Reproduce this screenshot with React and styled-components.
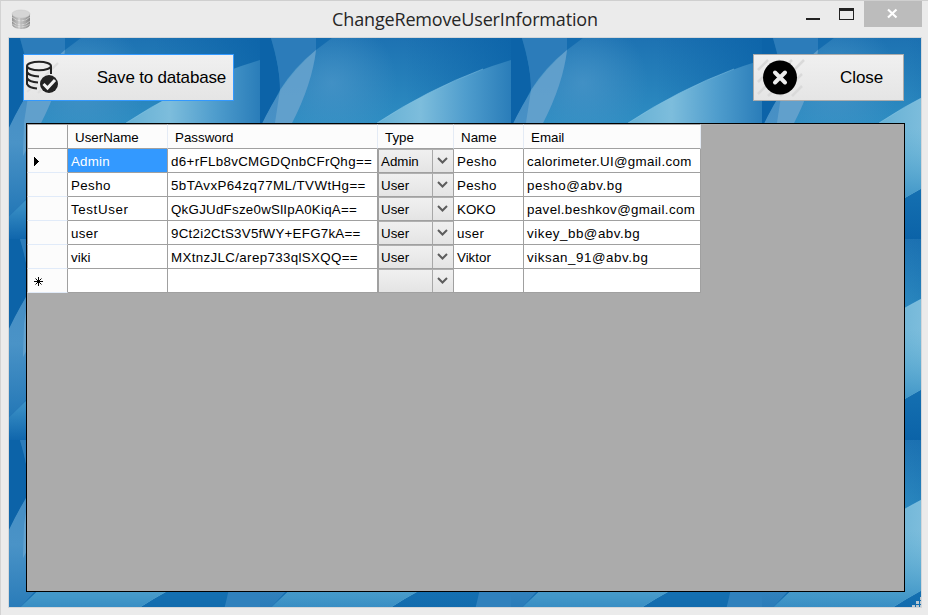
import React from 'react';
import styled, { createGlobalStyle } from 'styled-components';

const GlobalStyle = createGlobalStyle`
  * { box-sizing: border-box; }
  body { margin: 0; overflow: hidden; background: #ebebeb; }
`;

const Window = styled.div`
  width: 928px;
  height: 615px;
  display: flex;
  flex-direction: column;
  background: #ebebeb;
  border-top: 1px solid #cfcfcf;
  border-left: 1px solid #d3d3d3;
  font-family: 'Liberation Sans', Arial, sans-serif;
  color: #000;
`;

const TitleBar = styled.header`
  height: 36px;
  display: grid;
  grid-template-columns: 125px 1fr 124px;
  flex: none;
`;

const AppIcon = styled.svg`
  width: 20px;
  height: 20px;
  margin: 8px 0 0 10px;
`;

const Title = styled.h1`
  margin: 0;
  font: 400 18px/37px 'Open Sans', sans-serif;
  letter-spacing: -0.16px;
  text-align: center;
  color: #262626;
  white-space: nowrap;
`;

const WindowControls = styled.div`
  display: flex;
  justify-content: flex-end;
  padding-right: 6px;
`;

const ControlIcon = styled.svg`
  width: ${(p) => p.$width}px;
  height: 26px;
  flex: none;
  background: ${(p) => (p.$filled ? '#bcbcbc' : 'transparent')};
`;

const Client = styled.main`
  position: relative;
  width: 914px;
  height: 571px;
  margin-left: 7px;
  padding: 16px 17px 15px;
  border: 1px solid #d4d7da;
  display: flex;
  flex-direction: column;
  isolation: isolate;
`;

const Wallpaper = styled.svg`
  position: absolute;
  inset: 0;
  width: 912px;
  height: 569px;
  z-index: -1;
`;

const Toolbar = styled.div`
  height: 47px;
  margin: 0 0 22px -3px;
  display: flex;
  justify-content: space-between;
  flex: none;
`;

const ActionButton = styled.button`
  width: ${(p) => p.$width}px;
  height: 47px;
  padding: 0 ${(p) => p.$padRight}px 0 0;
  display: flex;
  align-items: center;
  justify-content: space-between;
  border: 1px solid ${(p) => (p.$focused ? '#3399ff' : '#acacac')};
  background: linear-gradient(#f0f0f0, #e5e5e5);
  color: #000;
  font: 17px 'Liberation Sans', Arial, sans-serif;
  letter-spacing: ${(p) => p.$spacing}px;
  white-space: nowrap;
`;

const ButtonIcon = styled.svg`
  width: 52px;
  height: 45px;
  flex: none;
`;

const GridPanel = styled.section`
  width: 879px;
  height: 469px;
  border: 1px solid #000;
  background: #ababab;
  flex: none;
`;

const DataGrid = styled.div`
  width: 674px;
  display: grid;
  grid-template-columns: 41px 100px 210px 76px 70px 177px;
  grid-template-rows: 25px;
  grid-auto-rows: 24px;
  font-size: 13.33px;
  white-space: nowrap;
`;

const HeaderCell = styled.div`
  padding: 1px 0 0 7px;
  line-height: 24px;
  background: #fcfcfc;
  border-top: 1px solid #a8a8a8;
  border-right: 1px solid ${(p) => (p.$corner ? '#a0a0a0' : '#e4ebf5')};
  border-bottom: 1px solid #a0a0a0;
  border-left: ${(p) => (p.$corner ? '1px solid #a8a8a8' : 'none')};
`;

const RowHeader = styled.div`
  background: #fcfcfc;
  border-left: 1px solid #a8a8a8;
  border-right: 1px solid #a0a0a0;
  border-bottom: 1px solid #e1ebf9;
`;

const Marker = styled.svg`
  display: block;
  width: 39px;
  height: 23px;
`;

const Cell = styled.div`
  padding-left: 3px;
  line-height: 25px;
  letter-spacing: ${(p) => p.$spacing || 0}px;
  color: ${(p) => (p.$selected ? '#fff' : '#000')};
  background: ${(p) => (p.$selected ? '#3399ff' : '#fff')};
  border-right: 1px solid #a0a0a0;
  border-bottom: 1px solid #a0a0a0;
`;

const ComboCell = styled.div`
  display: grid;
  grid-template-columns: 54px 20px;
  border: 1px solid #a0a0a0;
  border-top-color: #b0b0b0;
  background: linear-gradient(#f0f0f0, #e4e4e4);
`;

const ComboValue = styled.span`
  height: 22px;
  padding-left: 2px;
  line-height: 23px;
  border-right: 1px solid #a8a8a8;
`;

const ComboArrow = styled.svg`
  width: 20px;
  height: 22px;
`;

const SizeGrip = styled.svg`
  position: absolute;
  right: 0;
  bottom: 0;
  width: 10px;
  height: 10px;
`;

const columns = ['UserName', 'Password', 'Type', 'Name', 'Email'];

const users = [
  { user: 'Admin', password: 'd6+rFLb8vCMGDQnbCFrQhg==', type: 'Admin', name: 'Pesho', email: 'calorimeter.UI@gmail.com', tracking: [0.2, 0.34, 0.4, 0.34] },
  { user: 'Pesho', password: '5bTAvxP64zq77ML/TVWtHg==', type: 'User', name: 'Pesho', email: 'pesho@abv.bg', tracking: [0.4, 0.42, 0.4, 0.58] },
  { user: 'TestUser', password: 'QkGJUdFsze0wSlIpA0KiqA==', type: 'User', name: 'KOKO', email: 'pavel.beshkov@gmail.com', tracking: [0.62, 0.25, 0, 0.38] },
  { user: 'user', password: '9Ct2i2CtS3V5fWY+EFG7kA==', type: 'User', name: 'user', email: 'vikey_bb@abv.bg', tracking: [0.3, 0.26, 0.3, 0.53] },
  { user: 'viki', password: 'MXtnzJLC/arep733qlSXQQ==', type: 'User', name: 'Viktor', email: 'viksan_91@abv.bg', tracking: [0.1, 0.35, 0, 0.55] },
  { user: '', password: '', type: '', name: '', email: '', tracking: [] },
];

function Background() {
  return (
    <Wallpaper aria-hidden="true">
      <defs>
        <linearGradient id="base" x1="0" y1="0" x2="0" y2="1">
          <stop offset="0" stopColor="#1d72b2" />
          <stop offset="0.42" stopColor="#2e8dc2" />
          <stop offset="0.75" stopColor="#1570b1" />
          <stop offset="1" stopColor="#0b63a8" />
        </linearGradient>
        <radialGradient id="glow" gradientUnits="userSpaceOnUse" cx="72" cy="45" r="65">
          <stop offset="0" stopColor="#4d97c9" stopOpacity="0.7" />
          <stop offset="1" stopColor="#4d97c9" stopOpacity="0" />
        </radialGradient>
        <linearGradient id="edgeShade">
          <stop offset="0" stopColor="#0961a7" stopOpacity="0" />
          <stop offset="1" stopColor="#0961a7" stopOpacity="0.75" />
        </linearGradient>
        <linearGradient id="swoosh" x1="0" y1="0" x2="1" y2="0">
          <stop offset="0" stopColor="#3584bf" />
          <stop offset="0.4" stopColor="#5dabd1" />
          <stop offset="0.64" stopColor="#7dbddc" />
          <stop offset="0.82" stopColor="#4f9dcd" />
          <stop offset="1" stopColor="#2a7db9" />
        </linearGradient>
        <linearGradient id="lowerFade" gradientUnits="userSpaceOnUse" x1="0" y1="90" x2="0" y2="201">
          <stop offset="0" stopColor="#5aaed3" stopOpacity="0" />
          <stop offset="0.6" stopColor="#4297c8" stopOpacity="0.95" />
          <stop offset="0.73" stopColor="#348ac2" />
          <stop offset="1" stopColor="#1066ac" />
        </linearGradient>
        <linearGradient id="leftBand" x1="0" y1="0" x2="0" y2="1">
          <stop offset="0" stopColor="#4289c0" />
          <stop offset="0.55" stopColor="#4a93c7" />
          <stop offset="1" stopColor="#2377b6" />
        </linearGradient>
        <pattern id="tile" width="251" height="201" patternUnits="userSpaceOnUse">
          <rect width="251" height="201" fill="url(#base)" />
          <rect width="251" height="201" fill="url(#glow)" />
          <rect x="145" width="106" height="90" fill="url(#edgeShade)" />
          <path d="M0 0H11Q21 35 20 52L0 90Z" fill="#0c63a8" />
          <path d="M11 0H56V12Q34 28 20 52Q20 28 11 0Z" fill="#2c7cba" />
          <path d="M56 12L72 0H56Z" fill="#0f68ad" fillOpacity="0.8" />
          <path d="M0 90Q22 42 56 12Q52 46 32 85L45 130L0 180Z" fill="url(#leftBand)" />
          <path d="M32 85L45 130L30 155Q70 115 117 85Z" fill="#2d8cc2" />
          <path d="M20 52Q35 29 56 12Q52 46 32 85L14 118L15 85Z" fill="#69a5cf" fillOpacity="0.75" />
          <path d="M0 179Q58 119 117 85Q181 43 251 22V115Q185 132 130 168L80 201H0Z" fill="url(#swoosh)" />
          <path d="M0 179Q58 119 117 85Q181 43 251 22V115Q185 132 130 168L80 201H0Z" fill="url(#lowerFade)" />
          <path d="M117 85Q167 52 223 31" fill="none" stroke="#8ac7e5" strokeOpacity="0.5" />
          <path d="M226 120L251 115V201H207Q219 157 226 120Z" fill="#3081bd" />
        </pattern>
      </defs>
      <rect width="912" height="569" fill="url(#tile)" />
    </Wallpaper>
  );
}

function DatabaseCheckIcon() {
  return (
    <ButtonIcon viewBox="0 0 52 45" fill="none">
      <path d="M20 22L34 8M14 38L30 22M3 37L12 29" stroke="#dedede" strokeWidth="2" />
      <g stroke="#222" strokeWidth="2">
        <ellipse cx="15" cy="11" rx="12" ry="4.3" />
        <path d="M3 11V29Q5 33 13 33.5M27 11V19M3 17Q5 21 15 21.5M3 23Q5 27 14 27.5" />
      </g>
      <circle cx="25" cy="29" r="10" fill="#ebebeb" />
      <circle cx="25" cy="29" r="9" fill="#222" />
      <path d="M19.5 29L23.5 33L31 25" stroke="#f2f2f2" strokeWidth="3" />
    </ButtonIcon>
  );
}

function CloseIcon() {
  return (
    <ButtonIcon viewBox="0 0 52 45" fill="none">
      <path d="M4 15L14 5M4 27L26 5M4 39L38 5M14 41L50 5M26 41L48 19M38 41L48 31" stroke="#dadada" strokeWidth="2.5" />
      <circle cx="26" cy="22.5" r="17" fill="#000" />
      <path d="M21 17.5L31 27.5M31 17.5L21 27.5" stroke="#ededed" strokeWidth="4" strokeLinecap="round" />
    </ButtonIcon>
  );
}

function RowMarker({ kind }) {
  return (
    <Marker shapeRendering={kind === 'current' ? 'crispEdges' : 'auto'}>
      {kind === 'current' ? (
        <path d="M6 8H7V9H8V10H9V11H10V12H11V13H10V14H9V15H8V16H7V17H6Z" />
      ) : (
        <path d="M10.5 8V17M6 12.5H15M7.5 9.5L13.5 15.5M13.5 9.5L7.5 15.5" stroke="#000" fill="none" />
      )}
    </Marker>
  );
}

function UserRow({ row, index }) {
  const [userGap, passwordGap, nameGap, emailGap] = row.tracking;
  return (
    <>
      <RowHeader>
        {index === 0 && <RowMarker kind="current" />}
        {index === 5 && <RowMarker kind="new" />}
      </RowHeader>
      <Cell $selected={index === 0} $spacing={userGap}>{row.user}</Cell>
      <Cell $spacing={passwordGap}>{row.password}</Cell>
      <ComboCell>
        <ComboValue>{row.type}</ComboValue>
        <ComboArrow>
          <path d="M5 8L9.5 12.5L14 8" fill="none" stroke="#5c5c5c" strokeWidth="2" />
        </ComboArrow>
      </ComboCell>
      <Cell $spacing={nameGap}>{row.name}</Cell>
      <Cell $spacing={emailGap}>{row.email}</Cell>
    </>
  );
}

export default function App() {
  return (
    <>
      <GlobalStyle />
      <Window>
        <TitleBar>
          <AppIcon viewBox="0 0 20 20">
            <defs>
              <linearGradient id="metal">
                <stop offset="0" stopColor="#909090" />
                <stop offset="0.4" stopColor="#d2d2d2" />
                <stop offset="1" stopColor="#858585" />
              </linearGradient>
            </defs>
            <path d="M1 5V16Q3 20 10 20Q17 20 19 16V5Z" fill="url(#metal)" />
            <path d="M1 8Q5 12 10 12T19 8M1 12Q5 16 10 16T19 12M1 15Q5 18 10 18T19 15" fill="none" stroke="#f2f2f2" strokeOpacity="0.5" />
            <path d="M6 8V19M10 9V20M14 8V19" stroke="#b0b0b0" strokeWidth="0.8" />
            <ellipse cx="10" cy="5" rx="9" ry="4" fill="#d5d5d5" stroke="#c4c4c4" strokeWidth="0.5" />
          </AppIcon>
          <Title>ChangeRemoveUserInformation</Title>
          <WindowControls>
            <ControlIcon $width={32} viewBox="0 0 32 26">
              <path d="M6 17H20V19H6Z" fill="#222" />
            </ControlIcon>
            <ControlIcon $width={32} viewBox="0 0 32 26" shapeRendering="crispEdges">
              <path d="M7 7H22V19H7ZM8 10V18H21V10Z" fill="#222" fillRule="evenodd" />
            </ControlIcon>
            <ControlIcon $width={58} $filled viewBox="0 0 58 26">
              <path d="M24 8.5L32.5 16.5M32.5 8.5L24 16.5" fill="none" stroke="#fff" strokeWidth="2.2" />
            </ControlIcon>
          </WindowControls>
        </TitleBar>
        <Client>
          <Background />
          <Toolbar>
            <ActionButton $width={211} $padRight={7} $spacing={-0.19} $focused>
              <DatabaseCheckIcon />
              <span>Save to database</span>
            </ActionButton>
            <ActionButton $width={151} $padRight={20} $spacing={-0.1}>
              <CloseIcon />
              <span>Close</span>
            </ActionButton>
          </Toolbar>
          <GridPanel>
            <DataGrid>
              <HeaderCell $corner />
              {columns.map((c) => <HeaderCell key={c}>{c}</HeaderCell>)}
              {users.map((row, i) => <UserRow key={i} row={row} index={i} />)}
            </DataGrid>
          </GridPanel>
          <SizeGrip shapeRendering="crispEdges">
            <path d="M9 0h1v3h-1zM5 4h3v3H5zM9 4h1v3H9zM1 8h3v2H1zM5 8h3v2H5zM9 8h1v2H9z" fill="#bcc8d0" />
          </SizeGrip>
        </Client>
      </Window>
    </>
  );
}
